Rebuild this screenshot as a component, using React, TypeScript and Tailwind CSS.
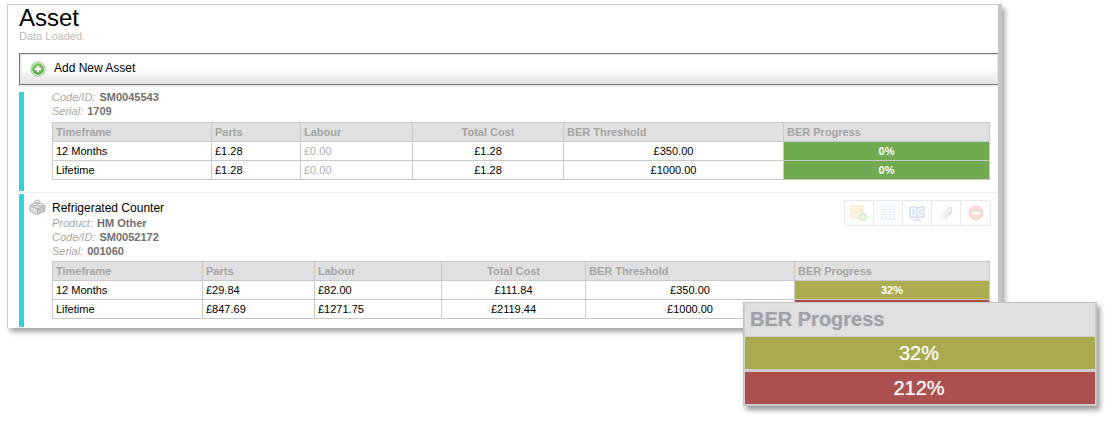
import React from "react";

type Row = [string, string, string, string, string, string];

function PlusIcon() {
  return (
    <svg width="16" height="16" viewBox="0 0 16 16">
      <defs>
        <radialGradient id="pg" cx="50%" cy="40%" r="60%">
          <stop offset="0%" stopColor="#a9dc8e" />
          <stop offset="70%" stopColor="#6cb85a" />
          <stop offset="100%" stopColor="#4e9a44" />
        </radialGradient>
      </defs>
      <circle cx="8" cy="8" r="7.2" fill="#dfeeda" stroke="#8cc07f" strokeWidth="0.8" />
      <circle cx="8" cy="8" r="5.8" fill="url(#pg)" />
      <path d="M8 5v6M5 8h6" stroke="#fff" strokeWidth="2" />
    </svg>
  );
}

function BrickIcon() {
  return (
    <svg width="17" height="16" viewBox="0 0 17 16">
      <path d="M1 6.5 8.5 3 16 6.5v5.5L8.5 15.5 1 12z" fill="#e2e2e2" stroke="#9a9a9a" strokeWidth="0.8" />
      <path d="M8.5 10 16 6.5V12l-7.5 3.5z" fill="#c4c4c4" />
      <path d="M1 6.5 8.5 10 16 6.5M8.5 10v5.5" fill="none" stroke="#a5a5a5" strokeWidth="0.8" />
      <ellipse cx="5.6" cy="5.5" rx="2.5" ry="1.4" fill="#f2f2f2" stroke="#9a9a9a" strokeWidth="0.7" />
      <ellipse cx="11.2" cy="5.5" rx="2.5" ry="1.4" fill="#f2f2f2" stroke="#9a9a9a" strokeWidth="0.7" />
      <ellipse cx="8.4" cy="2.6" rx="2.5" ry="1.4" fill="#f8f8f8" stroke="#9a9a9a" strokeWidth="0.7" />
    </svg>
  );
}

function Toolbar() {
  const cell = "w-[29px] flex items-center justify-center border-r border-[#eaeaea] last:border-r-0";
  return (
    <div className="absolute right-[7px] top-[6px] h-[26px] flex border border-[#e8e8e8] rounded-[2px] bg-white">
      <div className={cell}>
        <svg className="opacity-25" width="18" height="18" viewBox="0 0 18 18">
          <rect x="1" y="2" width="12" height="12" fill="#fbd98a" stroke="#e2a33a" />
          <path d="M1 7h12" stroke="#e2a33a" />
          <circle cx="13" cy="13" r="3.8" fill="#7cc36b" stroke="#4c9a40" strokeWidth="0.7" />
          <path d="M13 11v4M11 13h4" stroke="#fff" />
        </svg>
      </div>
      <div className={cell}>
        <svg className="opacity-20" width="16" height="16" viewBox="0 0 16 16">
          <rect x="1.5" y="1.5" width="13" height="13" fill="#eef4fc" stroke="#7da3d8" />
          <path d="M1.5 4.5h13M1.5 7h13M1.5 9.5h13M1.5 12h13M5 4.5v10M10 4.5v10" stroke="#9dbbe3" />
        </svg>
      </div>
      <div className={cell}>
        <svg className="opacity-30" width="18" height="16" viewBox="0 0 18 16">
          <path d="M9 3C7 1.6 4 1.6 2 2.4v10c2-.8 5-.8 7 .6 2-1.4 5-1.4 7-.6v-10C14 1.6 11 1.6 9 3z" fill="#dce9f7" stroke="#2e6aa8" />
          <path d="M9 3v10M4 5h3M4 7h3M4 9h3M11 5h3M11 7h3M11 9h3" stroke="#2e6aa8" strokeWidth="0.7" />
          <path d="M5 15h8" stroke="#2e6aa8" />
        </svg>
      </div>
      <div className={cell}>
        <svg className="opacity-20" width="16" height="16" viewBox="0 0 16 16">
          <path d="M13 5.5 6.5 12a2.2 2.2 0 0 1-3.1-3.1l7-7a1.5 1.5 0 0 1 2.1 2.1L6 10.5" fill="none" stroke="#777" strokeWidth="1.3" transform="translate(1 1)" />
        </svg>
      </div>
      <div className={cell}>
        <svg className="opacity-25" width="16" height="16" viewBox="0 0 16 16">
          <circle cx="8" cy="8" r="7" fill="#ef6a6a" stroke="#c94a4a" />
          <rect x="4" y="6.8" width="8" height="2.4" fill="#fff" />
        </svg>
      </div>
    </div>
  );
}

function AssetTable({ widths, rows, colors }: { widths: string[]; rows: Row[]; colors: string[] }) {
  const th = "border border-[#c9c9c9] bg-[#e0e0e0] text-[#a5a5a5] font-bold px-[3px] h-[19px] p-0";
  const td = "border border-[#c9c9c9] px-[3px] h-[19px] p-0";
  return (
    <table className="w-[937px] border-collapse table-fixed text-[11px] leading-[13px] text-black">
      <colgroup>
        {widths.map((w, i) => (
          <col key={i} className={w} />
        ))}
      </colgroup>
      <thead>
        <tr>
          <th className={`${th} text-left`}>Timeframe</th>
          <th className={`${th} text-left`}>Parts</th>
          <th className={`${th} text-left`}>Labour</th>
          <th className={`${th} text-center`}>Total Cost</th>
          <th className={`${th} text-left`}>BER Threshold</th>
          <th className={`${th} text-left`}>BER Progress</th>
        </tr>
      </thead>
      <tbody>
        {rows.map((r, i) => (
          <tr key={i}>
            <td className={td}>{r[0]}</td>
            <td className={td}>{r[1]}</td>
            <td className={`${td} ${r[2] === "£0.00" ? "text-[#b0b0b0]" : ""}`}>{r[2]}</td>
            <td className={`${td} text-center`}>{r[3]}</td>
            <td className={`${td} text-center`}>{r[4]}</td>
            <td className={`${td} text-center text-white font-bold ${colors[i]}`}>{r[5]}</td>
          </tr>
        ))}
      </tbody>
    </table>
  );
}

function Meta({ label, value }: { label: string; value: string }) {
  return (
    <div className="h-[14px] text-[11px] leading-[14px]">
      <span className="italic text-[#a8a8a8]">{label}: </span>
      <span className="font-bold text-[#707070] ml-[1px]">{value}</span>
    </div>
  );
}

export default function App() {
  return (
    <div className="w-[1115px] h-[425px] bg-white overflow-hidden pt-[4px] pl-[7px] relative" style={{ fontFamily: '"Liberation Sans", Arial, sans-serif' }}>
      <div className="relative w-[995px] h-[324px] bg-white border border-[#cccccc] border-b-0 border-r-[4px] border-r-[#c6c6c6] shadow-[3px_4px_5px_rgba(0,0,0,0.35)]">
        <div className="pl-[11px]">
          <h1 className="text-[24px] leading-[25px] text-black font-normal">Asset</h1>
          <div className="text-[11px] leading-[13px] text-[#bbbbbb]">Data Loaded.</div>
          <div className="mt-[10px] h-[32px] border border-[#777777] border-r-0 bg-gradient-to-b from-white via-white to-[#e2e2e2] shadow-[inset_0_0_0_1px_#e4e4e4,0_2px_0_#eeeeee] flex items-center">
            <span className="ml-[10px] flex"><PlusIcon /></span>
            <span className="ml-[8px] mb-[2px] text-[12px] text-black">Add New Asset</span>
          </div>
          <div className="flow-root h-[99px] mt-[7px] border-l-[5px] border-[#2fd2d8] pl-[28px]">
            <div className="mt-[-2px]">
              <Meta label="Code/ID" value="SM0045543" />
              <Meta label="Serial" value="1709" />
            </div>
            <div className="mt-[4px]">
              <AssetTable
                widths={["w-[159px]", "w-[89px]", "w-[112px]", "w-[151px]", "w-[220px]", "w-[206px]"]}
                colors={["bg-[#70ab52]", "bg-[#70ab52]"]}
                rows={[
                  ["12 Months", "£1.28", "£0.00", "£1.28", "£350.00", "0%"],
                  ["Lifetime", "£1.28", "£0.00", "£1.28", "£1000.00", "0%"],
                ]}
              />
            </div>
          </div>
          <div className="h-[1px] mt-[1px] bg-[#eeeeee]" />
          <div className="relative h-[133px] mt-[1px] border-l-[5px] border-[#2fd2d8] pl-[28px] pt-[7px]">
            <span className="absolute left-[5px] top-[5px] flex"><BrickIcon /></span>
            <div className="text-[12px] leading-[15px] text-black">Refrigerated Counter</div>
            <Meta label="Product" value="HM Other" />
            <Meta label="Code/ID" value="SM0052172" />
            <Meta label="Serial" value="001060" />
            <div className="mt-[3px]">
              <AssetTable
                widths={["w-[150px]", "w-[112px]", "w-[127px]", "w-[144px]", "w-[209px]", "w-[195px]"]}
                colors={["bg-[#acac52]", "bg-[#ac4f4f]"]}
                rows={[
                  ["12 Months", "£29.84", "£82.00", "£111.84", "£350.00", "32%"],
                  ["Lifetime", "£847.69", "£1271.75", "£2119.44", "£1000.00", "212%"],
                ]}
              />
            </div>
            <Toolbar />
          </div>
        </div>
      </div>
      <div className="absolute left-[743px] top-[302px] w-[354px] h-[104px] bg-[#cfcfcf] border border-[#c4c4c4] shadow-[3px_4px_5px_rgba(0,0,0,0.4)] flex flex-col px-[1px]">
        <div className="h-[33px] bg-[#e0e0e0] text-[20px] leading-[33px] font-bold text-[#a0a2a8] px-[5px] [text-shadow:0_0_1px_rgba(160,162,168,0.6)]">BER Progress</div>
        <div className="mt-[1px] h-[32px] bg-[#a9a94f] text-[20px] leading-[32px] text-center pr-[2px] text-[#f6f6ea] [text-shadow:0_0_1px_rgba(255,255,255,0.9)]">32%</div>
        <div className="mt-[3px] h-[32px] bg-[#ab4f4f] text-[20px] leading-[33px] text-center pr-[2px] text-[#faf0f2] [text-shadow:0_0_1px_rgba(255,255,255,0.9)]">212%</div>
      </div>
    </div>
  );
}
